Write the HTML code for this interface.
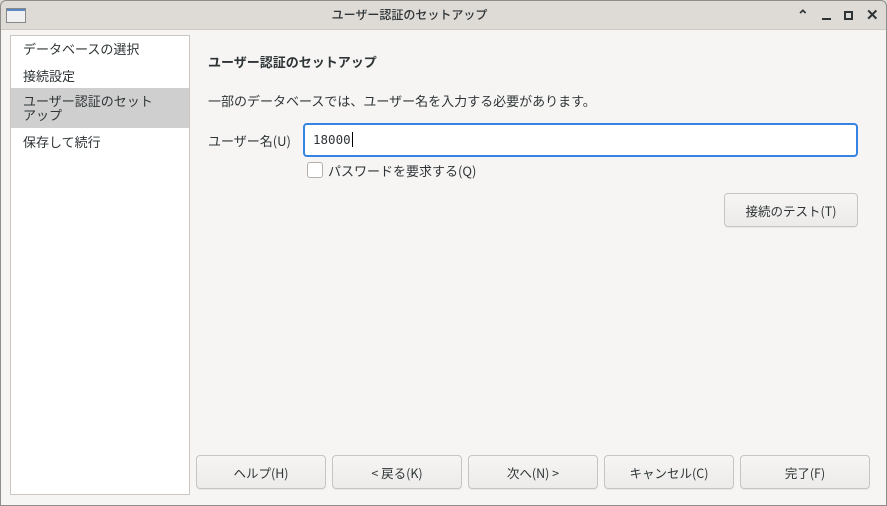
<!DOCTYPE html>
<html><head><meta charset="utf-8"><style>
*{box-sizing:border-box;margin:0;padding:0}
body{width:887px;height:506px;overflow:hidden;background:#f6f5f4;font-family:"Noto Sans CJK JP","Liberation Sans",sans-serif;font-size:13px;color:#2e3436;position:relative}
.win{position:absolute;left:0;top:0;width:887px;height:506px;overflow:hidden;background:#f6f5f4}
.frame{position:absolute;left:0;top:0;width:887px;height:506px;border:1px solid #8f8d8a;border-radius:6px 6px 0 0;pointer-events:none}
.title{position:absolute;left:0;top:0;width:887px;height:30px;background:#dedad6;border-bottom:1px solid #cfcac4;font-size:12px;color:#2e3436}
.ttext{position:absolute;left:0;width:819px;text-align:center;line-height:30px;font-weight:500}
.icon{position:absolute;left:6px;top:8px;width:20px;height:15px;border:1px solid #888;background:linear-gradient(#5b87c5 0 2px,#f0f0f0 2px)}
.ctl{position:absolute;top:0;line-height:30px;font-weight:bold;color:#2e3436;font-size:14px}
.side{position:absolute;left:10px;top:35px;width:180px;height:460px;background:#fff;border:1px solid #cdc7c2}
.side div{padding-left:12px;line-height:14px}
.abs{position:absolute}
.btn{position:absolute;height:34px;border:1px solid #c9c4bf;border-radius:4px;background:linear-gradient(#f6f5f4,#edebe9);text-align:center;line-height:33px;font-size:12.5px;box-shadow:0 1px 0 rgba(0,0,0,.05)}
</style></head><body><div class="win">
<div class="title"><div class="icon"></div><div class="ttext">ユーザー認証のセットアップ</div>
<span class="ctl" style="left:797px">&#8963;</span>
<span class="abs" style="left:822px;top:18px;width:9px;height:2px;background:#2e3436"></span>
<span class="abs" style="left:844px;top:11px;width:9px;height:9px;border:2px solid #2e3436"></span>
<span class="ctl" style="left:866px;font-size:15px">✕</span>
</div>
<div class="side">
<div style="position:absolute;top:6px">データベースの選択</div>
<div style="position:absolute;top:33px">接続設定</div>
<div style="position:absolute;top:52px;width:178px;height:40px;background:#cfcfcf;padding-top:6px">ユーザー認証のセット<br>アップ</div>
<div style="position:absolute;top:99px">保存して続行</div>
</div>
<div class="abs" style="left:208px;top:52px;font-weight:bold">ユーザー認証のセットアップ</div>
<div class="abs" style="left:208px;top:91px">一部のデータベースでは、ユーザー名を入力する必要があります。</div>
<div class="abs" style="left:208px;top:131px">ユーザー名(U)</div>
<div class="abs" style="left:303px;top:123px;width:555px;height:34px;border:2px solid #3584e4;border-radius:4px;background:#fff;padding-left:8px;line-height:30px;font-family:'DejaVu Sans Mono',monospace;font-size:12.5px">18000<span style="border-left:1px solid #000;margin-left:1px"></span></div>
<div class="abs" style="left:307px;top:162px;width:16px;height:16px;border:1px solid #b6b0aa;border-radius:3px;background:#fff"></div>
<div class="abs" style="left:328px;top:161px">パスワードを要求する(Q)</div>
<div class="btn" style="left:724px;top:193px;width:134px">接続のテスト(T)</div>
<div class="btn" style="left:196px;top:455px;width:130px">ヘルプ(H)</div>
<div class="btn" style="left:332px;top:455px;width:130px">&lt; 戻る(K)</div>
<div class="btn" style="left:468px;top:455px;width:130px">次へ(N) &gt;</div>
<div class="btn" style="left:604px;top:455px;width:130px">キャンセル(C)</div>
<div class="btn" style="left:740px;top:455px;width:130px">完了(F)</div>
<div class="frame"></div>
</div></body></html>
